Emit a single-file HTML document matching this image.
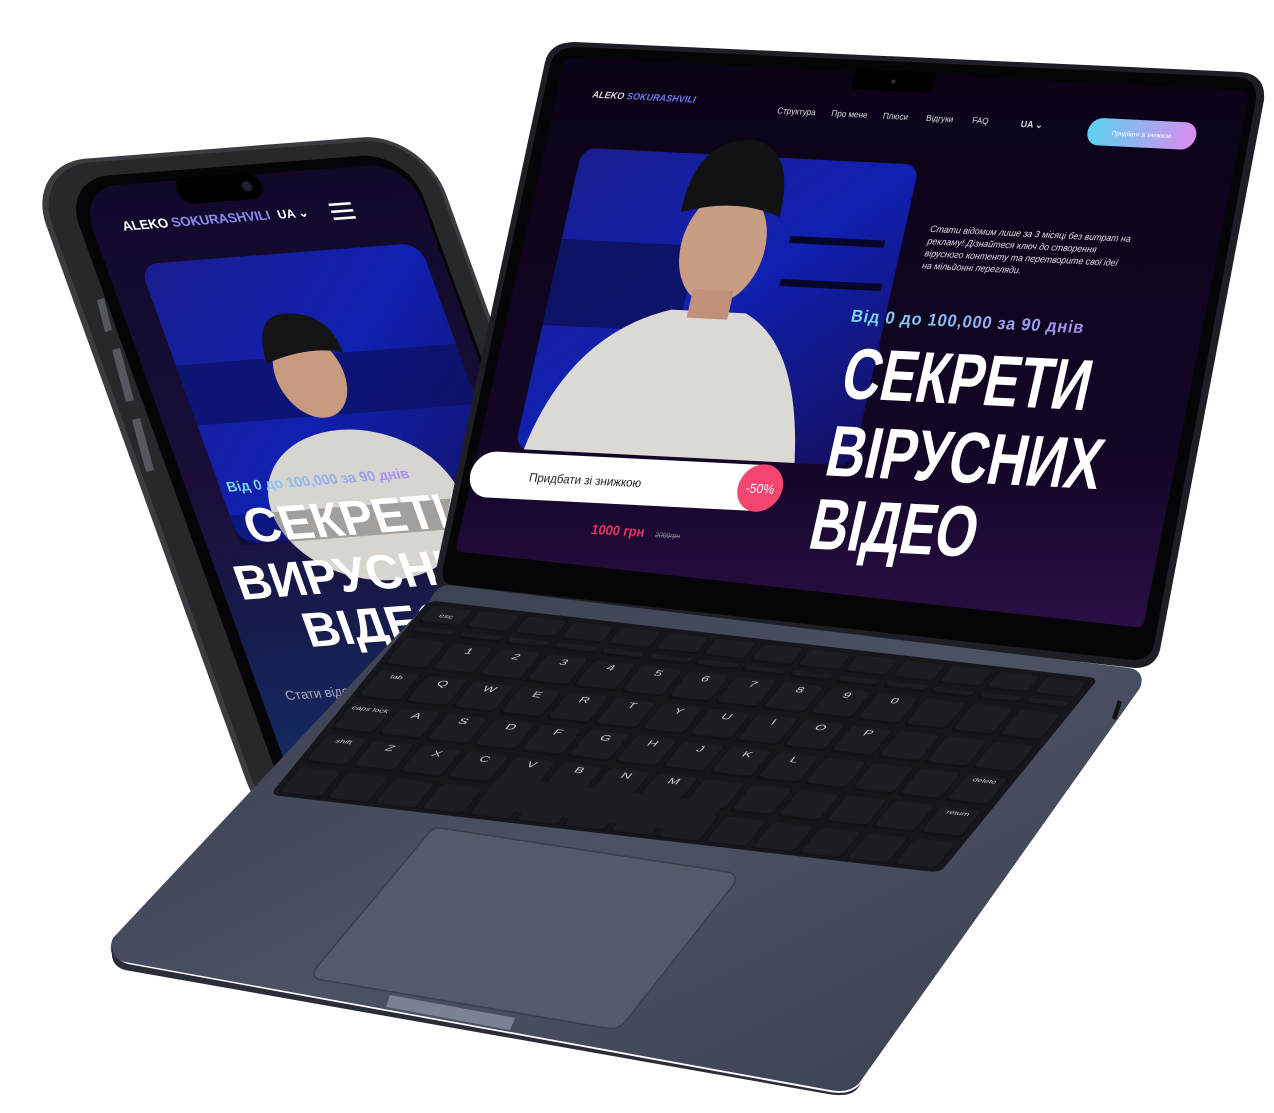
<!DOCTYPE html>
<html><head><meta charset="utf-8"><style>
html,body{margin:0;padding:0;background:#fff;width:1274px;height:1113px;overflow:hidden}
svg{display:block}
text{font-family:"Liberation Sans",sans-serif}
</style></head><body>
<svg width="1274" height="1113" viewBox="0 0 1274 1113" xmlns="http://www.w3.org/2000/svg">
<defs>
<linearGradient id="deck" x1="0" y1="0" x2="1" y2="1">
<stop offset="0" stop-color="#363b4b"/><stop offset="0.5" stop-color="#4c5264"/><stop offset="1" stop-color="#393e4f"/></linearGradient>
<linearGradient id="disp" x1="0" y1="0" x2="0" y2="1">
<stop offset="0" stop-color="#0b0316"/><stop offset="0.7" stop-color="#120626"/><stop offset="1" stop-color="#2a0f45"/></linearGradient>
<linearGradient id="phdisp" x1="0" y1="0" x2="0" y2="1">
<stop offset="0" stop-color="#12082a"/><stop offset="0.5" stop-color="#1a0f3a"/><stop offset="1" stop-color="#12306a"/></linearGradient>
<linearGradient id="photo" x1="0" y1="0" x2="1" y2="1">
<stop offset="0" stop-color="#1a1e90"/><stop offset="0.5" stop-color="#1020b0"/><stop offset="1" stop-color="#141060"/></linearGradient>
<linearGradient id="btn" x1="0" y1="0" x2="1" y2="0">
<stop offset="0" stop-color="#5ad2f0"/><stop offset="1" stop-color="#d98cf0"/></linearGradient>
<linearGradient id="sub" x1="0" y1="0" x2="1" y2="0">
<stop offset="0" stop-color="#7ad8f0"/><stop offset="1" stop-color="#a88af0"/></linearGradient>
<pattern id="keys" x="0" y="0" width="71.4" height="85" patternUnits="userSpaceOnUse">
<rect x="3" y="4" width="64" height="74" rx="8" fill="#121317"/>
<rect x="5" y="5" width="60" height="66" rx="7" fill="#1c1d22"/>
</pattern>
<pattern id="fkeys" x="0" y="0" width="71.4" height="55" patternUnits="userSpaceOnUse">
<rect x="3" y="4" width="64" height="46" rx="7" fill="#121317"/>
<rect x="5" y="5" width="60" height="40" rx="6" fill="#1c1d22"/>
</pattern>
</defs>

<!-- PHONE -->
<g transform="matrix(1,-0.077,0.36,1,78,188)">
<rect x="-44" y="-28" width="400" height="680" rx="62" fill="#3a3c40"/>
<rect x="-38" y="-24" width="390" height="672" rx="58" fill="#26282c"/>
<rect x="-12" y="-10" width="345" height="650" rx="46" fill="#050507"/>
<rect x="0" y="0" width="330" height="630" rx="40" fill="url(#phdisp)"/>
<rect x="95" y="-2" width="85" height="26" rx="13" fill="#000"/>
<circle cx="165" cy="11" r="5" fill="#1d2333"/>
<text x="30" y="45" font-size="13" font-weight="bold" fill="#fff">ALEKO <tspan fill="#8a8cf5">SOKURASHVILI</tspan></text>
<text x="185" y="45" font-size="12" font-weight="bold" fill="#fff">UA ⌄</text>
<rect x="238" y="34" width="22" height="2.5" fill="#fff"/><rect x="238" y="41" width="22" height="2.5" fill="#fff"/><rect x="238" y="48" width="22" height="2.5" fill="#fff"/>
<rect x="33" y="79" width="280" height="280" rx="18" fill="url(#photo)"/>
<rect x="33" y="180" width="280" height="60" fill="#0a0e55" opacity="0.6"/>
<ellipse cx="170" cy="330" rx="95" ry="75" fill="#d8d4d0"/>
<ellipse cx="160" cy="200" rx="34" ry="42" fill="#c89a80"/>
<path d="M122 185 Q125 135 160 138 Q200 140 200 180 Q170 170 122 185Z" fill="#141416"/>
<rect x="33" y="330" width="280" height="30" fill="#000" opacity="0.25"/>
<text x="40" y="307" font-size="14" font-weight="bold" fill="url(#sub)">Від 0 до 100,000 за 90 днів</text>
<text x="44" y="358" font-size="48" font-weight="900" fill="#fff">СЕКРЕТИ</text>
<text x="15" y="413" font-size="48" font-weight="900" fill="#fff">ВИРУСНИХ</text>
<text x="65" y="464" font-size="48" font-weight="900" fill="#fff">ВІДЕО</text>
<text x="24" y="514" font-size="13" fill="#aab">Стати відомим</text>
</g>
<!-- phone side buttons -->
<path d="M97 300 L104 298 L112 330 L105 332Z" fill="#55585e"/>
<path d="M112 350 L120 348 L134 400 L126 402Z" fill="#55585e"/>
<path d="M132 420 L140 418 L154 470 L146 472Z" fill="#55585e"/>

<!-- LAPTOP LID -->
<path d="M575 42 L1240 72 Q1266 74 1264 100 L1160 650 Q1155 668 1135 668 L450 592 Q432 590 436 570 L545 62 Q550 42 575 42Z" fill="#1d1f25"/>
<path d="M577 47 L1238 77 Q1258 79 1256 100 L1154 645 Q1150 660 1133 660 L452 585 Q440 583 443 568 L550 65 Q554 47 577 47Z" fill="#050507"/>
<path d="M575 58 L1240 90 Q1250 91 1248 100 L1144 622 Q1142 628 1135 627 L462 552 Q455 551 457 544 L563 66 Q566 58 575 58Z" fill="url(#disp)"/>

<g transform="matrix(0.677,0.034,-0.16,0.717,570,58)">
<rect x="420" y="-5" width="120" height="28" rx="6" fill="#000"/>
<circle cx="480" cy="10" r="3" fill="#333"/>
<text x="45" y="53" font-size="13" font-weight="bold" font-style="italic" fill="#ddd" textLength="152">ALEKO <tspan fill="#6f78f0">SOKURASHVILI</tspan></text>
<text x="320" y="62" font-size="12" fill="#ddd">Структура</text>
<text x="400" y="62" font-size="12" fill="#ddd">Про мене</text>
<text x="476" y="62" font-size="12" fill="#ddd">Плюси</text>
<text x="540" y="62" font-size="12" fill="#ddd">Відгуки</text>
<text x="608" y="62" font-size="12" fill="#ddd">FAQ</text>
<text x="680" y="64" font-size="13" font-weight="bold" fill="#ddd">UA ⌄</text>
<rect x="780" y="46" width="160" height="38" rx="19" fill="url(#btn)"/>
<text x="860" y="69" font-size="9" fill="#fff" text-anchor="middle">Придбати зі знижкою</text>
<rect x="47" y="123" width="498" height="420" rx="20" fill="url(#photo)"/>
<rect x="47" y="250" width="200" height="120" fill="#0a0c40" opacity="0.6"/>
<rect x="380" y="230" width="140" height="10" fill="#05062a"/>
<rect x="380" y="290" width="150" height="10" fill="#05062a"/>
<path d="M60 543 Q90 380 230 340 L340 340 Q430 380 460 543Z" fill="#dcd8d4"/>
<ellipse cx="285" cy="250" rx="62" ry="80" fill="#c99c84"/>
<rect x="255" y="310" width="60" height="40" fill="#c0907a"/>
<path d="M212 205 Q210 105 290 100 Q360 105 358 205 Q290 180 212 205Z" fill="#121214"/>
<text x="582" y="215" font-size="13" font-style="italic" fill="#ddd">Стати відомим лише за 3 місяці без витрат на</text>
<text x="582" y="232" font-size="13" font-style="italic" fill="#ddd">рекламу! Дізнайтеся ключ до створення</text>
<text x="582" y="249" font-size="13" font-style="italic" fill="#ddd">вірусного контенту та перетворите свої ідеї</text>
<text x="582" y="266" font-size="13" font-style="italic" fill="#ddd">на мільйонні перегляди.</text>
<text x="495" y="344" font-size="24" font-weight="bold" fill="url(#sub)" textLength="343">Від 0 до 100,000 за 90 днів</text>
<text x="503" y="450" font-size="100" font-weight="900" fill="#fff" textLength="365" lengthAdjust="spacingAndGlyphs">СЕКРЕТИ</text>
<text x="505" y="558" font-size="100" font-weight="900" fill="#fff" textLength="405" lengthAdjust="spacingAndGlyphs">ВІРУСНИХ</text>
<text x="505" y="660" font-size="100" font-weight="900" fill="#fff" textLength="245" lengthAdjust="spacingAndGlyphs">ВІДЕО</text>
<rect x="-10" y="548" width="460" height="64" rx="32" fill="#fff"/>
<text x="160" y="587" font-size="17" fill="#222" text-anchor="middle">Придбати зі знижкою</text>
<circle cx="418" cy="580" r="33" fill="#f24670"/>
<text x="418" y="587" font-size="18" fill="#fff" text-anchor="middle">-50%</text>
<text x="185" y="655" font-size="19" font-weight="bold" fill="#e8335f">1000 грн</text>
<text x="280" y="655" font-size="10" fill="#888" text-decoration="line-through">2000грн</text>
</g>

<!-- DECK -->
<path d="M450 585 L1130 668 Q1146 672 1140 688 L860 1082 Q850 1094 830 1090 L125 962 Q105 958 113 938 L430 600 Q438 584 450 585Z" fill="url(#deck)"/>
<path d="M113 945 Q110 958 128 964 L830 1092 Q852 1096 862 1082 L858 1088 Q850 1098 828 1094 L125 970 Q108 965 113 945Z" fill="#2a2d38"/>
<path d="M390 995 L515 1018 L510 1030 L386 1007Z" fill="#7a8294"/>
<path d="M1118 700 L1122 702 L1116 720 L1112 718Z" fill="#111"/>
<!-- keyboard -->
<g transform="matrix(0.662,0.077,-0.31,0.38,431,603)">
<rect x="-6" y="-6" width="1012" height="512" rx="14" fill="#16171b"/>
<rect x="0" y="0" width="1000" height="55" fill="url(#fkeys)"/>
<rect x="0" y="60" width="1000" height="440" fill="url(#keys)"/>
<rect x="290" y="400" width="340" height="78" rx="8" fill="#1c1d22"/>
<g font-size="20" fill="#ccc" text-anchor="middle">
<text x="36" y="32" font-size="13">esc</text>
<text x="107" y="112">1</text><text x="178" y="112">2</text><text x="250" y="112">3</text><text x="321" y="112">4</text><text x="393" y="112">5</text><text x="464" y="112">6</text><text x="536" y="112">7</text><text x="607" y="112">8</text><text x="678" y="112">9</text><text x="750" y="112">0</text>
<text x="36" y="192" font-size="13">tab</text>
<text x="107" y="197">Q</text><text x="178" y="197">W</text><text x="250" y="197">E</text><text x="321" y="197">R</text><text x="393" y="197">T</text><text x="464" y="197">Y</text><text x="536" y="197">U</text><text x="607" y="197">I</text><text x="678" y="197">O</text><text x="750" y="197">P</text>
<text x="36" y="277" font-size="13">caps lock</text>
<text x="107" y="282">A</text><text x="178" y="282">S</text><text x="250" y="282">D</text><text x="321" y="282">F</text><text x="393" y="282">G</text><text x="464" y="282">H</text><text x="536" y="282">J</text><text x="607" y="282">K</text><text x="678" y="282">L</text>
<text x="36" y="362" font-size="13">shift</text>
<text x="107" y="367">Z</text><text x="178" y="367">X</text><text x="250" y="367">C</text><text x="321" y="367">V</text><text x="393" y="367">B</text><text x="464" y="367">N</text><text x="536" y="367">M</text>
<text x="964" y="277" font-size="13">delete</text>
<text x="964" y="362" font-size="13">return</text>
</g>
</g>
<!-- trackpad -->
<path d="M440 828 L728 872 Q738 874 734 884 L625 1022 Q618 1030 606 1028 L322 980 Q310 978 316 968 L428 834 Q432 827 440 828Z" fill="#535a6a" stroke="#3a3f4d" stroke-width="1.5"/>
</svg>
</body></html>
